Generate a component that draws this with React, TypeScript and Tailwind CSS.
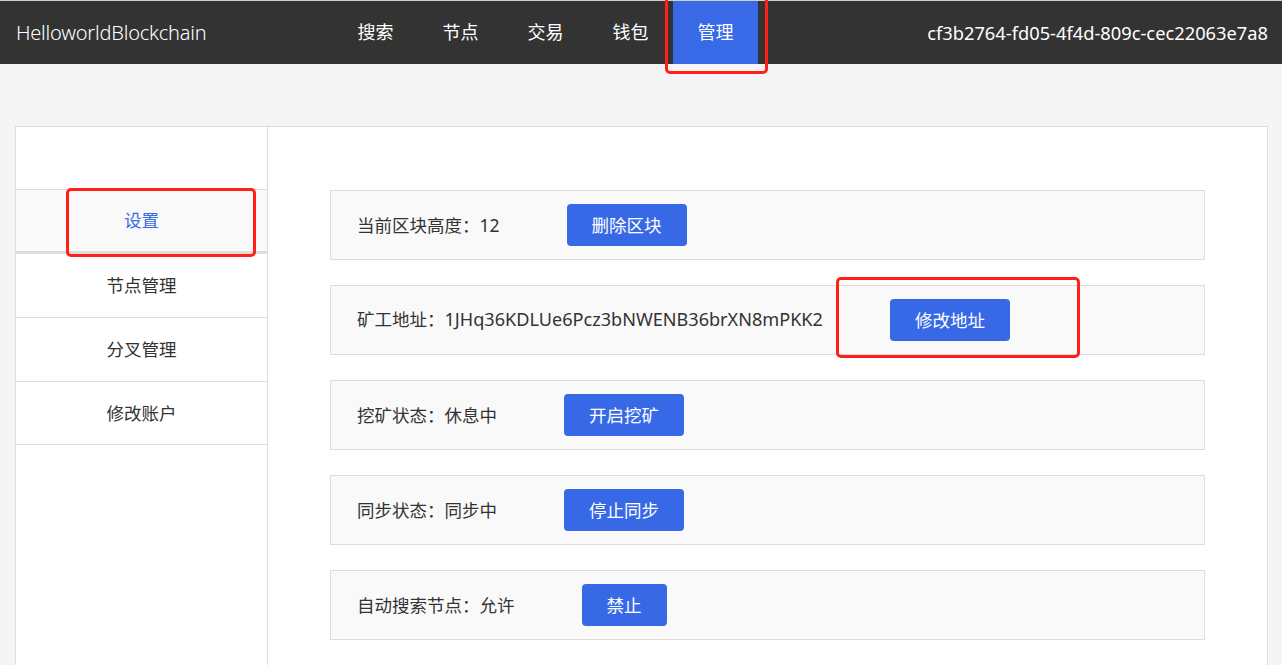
import React from 'react'

const NAV = ['搜索', '节点', '交易', '钱包', '管理']
const SIDE = ['设置', '节点管理', '分叉管理', '修改账户']

const ROWS: { label: string; value: string; action: string }[] = [
  { label: '当前区块高度：', value: '12', action: '删除区块' },
  { label: '矿工地址：', value: '1JHq36KDLUe6Pcz3bNWENB36brXN8mPKK2', action: '修改地址' },
  { label: '挖矿状态：', value: '休息中', action: '开启挖矿' },
  { label: '同步状态：', value: '同步中', action: '停止同步' },
  { label: '自动搜索节点：', value: '允许', action: '禁止' },
]

export default function App() {
  return (
    <div
      className="relative min-h-[665px] bg-[#f5f5f5] overflow-hidden"
      style={{ fontFamily: '"Noto Sans", "Noto Sans CJK SC", sans-serif' }}
    >
      {/* Header */}
      <header className="h-[64px] border-t border-[#d0d0d0] bg-[#333333] flex items-stretch text-white">
        <div className="pl-4 w-[333px] flex items-center text-[20px] font-light tracking-[-0.2px]">
          HelloworldBlockchain
        </div>
        <nav className="flex">
          {NAV.map((n) => (
            <div
              key={n}
              className={`w-[85px] flex items-center justify-center text-[18px] ${
                n === '管理' ? 'bg-[#3869e6]' : ''
              }`}
            >
              {n}
            </div>
          ))}
        </nav>
        <div className="ml-auto pr-[14px] flex items-center text-[18.3px]">
          cf3b2764-fd05-4f4d-809c-cec22063e7a8
        </div>
      </header>

      {/* Card */}
      <div className="mt-[62px] ml-[15px] mr-[14px] bg-white border border-[#dddddd] flex min-h-[560px]">
        {/* Sidebar */}
        <aside className="w-[252px] border-r border-[#dddddd] pt-[62px]">
          {SIDE.map((s, i) => (
            <div
              key={s}
              className={`h-[64px] flex items-center justify-center text-[17.5px] border-t border-[#dddddd] ${
                i === 0 ? 'bg-[#f9f9f9] text-[#3a6be6] border-b-2' : 'text-[#333333]'
              } ${i === SIDE.length - 1 ? 'border-b' : ''}`}
            >
              {s}
            </div>
          ))}
        </aside>

        {/* Content */}
        <main className="flex-1 px-[62px] pt-[63px] flex flex-col gap-[25px]">
          {ROWS.map((r) => (
            <div
              key={r.label}
              className="h-[70px] bg-[#f9f9f9] border border-[#dddddd] flex items-center pl-[26px] text-[17.5px] text-[#333333]"
            >
              <span>
                {r.label}
                <span className={r.value.length > 10 ? 'text-[18.1px]' : ''}>{r.value}</span>
              </span>
              <button
                type="button"
                className="ml-[67px] h-[42px] px-[25px] rounded-[4px] bg-[#3769e7] text-white text-[17.5px]"
              >
                {r.action}
              </button>
            </div>
          ))}
        </main>
      </div>

      {/* Red annotation boxes */}
      <div className="absolute left-[665px] top-[-6px] w-[103px] h-[80px] border-[3px] border-[#ff2018] rounded-[5px] pointer-events-none" />
      <div className="absolute left-[66px] top-[188px] w-[190px] h-[69px] border-[3px] border-[#ff2018] rounded-[5px] pointer-events-none" />
      <div className="absolute left-[836px] top-[277px] w-[244px] h-[81px] border-[3px] border-[#ff2018] rounded-[5px] pointer-events-none" />
    </div>
  )
}
